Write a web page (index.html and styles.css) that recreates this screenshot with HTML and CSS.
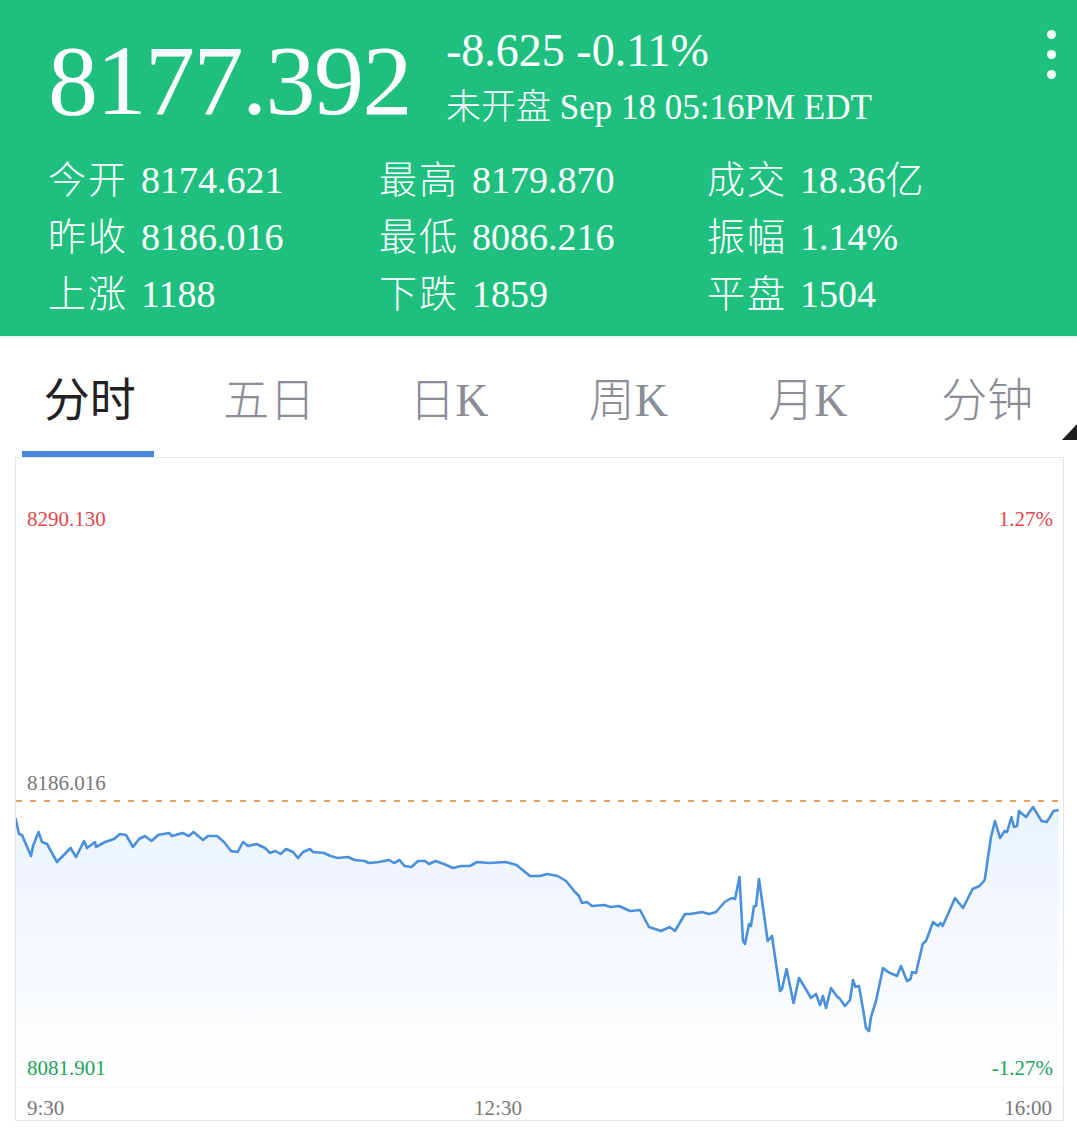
FILE: index.html
```html
<!DOCTYPE html>
<html lang="zh-CN">
<head>
    <meta charset="UTF-8">
    <meta name="viewport" content="width=device-width, initial-scale=1.0">
    <title>分时行情</title>
    <link rel="stylesheet" href="styles.css">
</head>
<body>
    <header class="quote-head">
        <div class="quote-top">
            <div class="price">8177.392</div>
            <div class="change">
                <div class="change-value">-8.625 -0.11%</div>
                <div class="market-time"><span class="cjk">未开盘</span> Sep 18 05:16PM EDT</div>
            </div>
            <div class="menu-dots">
                <span></span>
                <span></span>
                <span></span>
            </div>
        </div>
        <div class="stats">
            <div class="stat"><span class="stat-label">今开</span>8174.621</div>
            <div class="stat"><span class="stat-label">最高</span>8179.870</div>
            <div class="stat"><span class="stat-label">成交</span>18.36<span class="cjk">亿</span></div>
            <div class="stat"><span class="stat-label">昨收</span>8186.016</div>
            <div class="stat"><span class="stat-label">最低</span>8086.216</div>
            <div class="stat"><span class="stat-label">振幅</span>1.14%</div>
            <div class="stat"><span class="stat-label">上涨</span>1188</div>
            <div class="stat"><span class="stat-label">下跌</span>1859</div>
            <div class="stat"><span class="stat-label">平盘</span>1504</div>
        </div>
    </header>

    <nav class="tabs">
        <div class="tab active"><span class="tab-label">分时</span></div>
        <div class="tab"><span class="tab-label">五日</span></div>
        <div class="tab"><span class="tab-label">日K</span></div>
        <div class="tab"><span class="tab-label">周K</span></div>
        <div class="tab"><span class="tab-label">月K</span></div>
        <div class="tab"><span class="tab-label">分钟</span></div>
        <span class="corner"></span>
    </nav>

    <div class="chart">
        <svg class="chart-svg" width="1047" height="662" viewBox="16 459 1047 662">
            <defs>
                <linearGradient id="areaFill" x1="0" y1="0" x2="0" y2="1">
                    <stop offset="0" stop-color="#ebf3fb"/>
                    <stop offset="1" stop-color="#ffffff"/>
                </linearGradient>
            </defs>

            <!-- price area under the line -->
            <path id="area" fill="url(#areaFill)" d=""/>

            <line class="grid-line" x1="16" y1="1088" x2="1062" y2="1088"/>
            <line class="prev-close" x1="16" y1="802" x2="1062" y2="802"/>

            <polyline id="priceLine" class="price-line" points=""/>

            <text class="axis up" x="27" y="527">8290.130</text>
            <text class="axis up" x="1053" y="527" text-anchor="end">1.27%</text>
            <text class="axis flat" x="27" y="791">8186.016</text>
            <text class="axis down" x="27" y="1076">8081.901</text>
            <text class="axis down" x="1053" y="1076" text-anchor="end">-1.27%</text>
            <text class="axis flat" x="27" y="1116">9:30</text>
            <text class="axis flat" x="498" y="1116" text-anchor="middle">12:30</text>
            <text class="axis flat" x="1052" y="1116" text-anchor="end">16:00</text>
        </svg>
    </div>

    <script>
        // minute prices, already mapped to chart pixels
        const points = [
            [15.5,819],[19,835],[22,836],[31,857],[33,847],[38.5,833],[42,843],[47,845],[57,863],[70.6,849],
            [76,858],[84,842],[87,849],[95,843],[96,848],[105,843],[114,840],[120,835],[126,836],[133,848],
            [139,840],[145,837],[151.5,842],[158,836],[169,834],[172,837],[182.5,834],[189,837],[193.5,833],[203,841],
            [208,837],[217,837],[224,843],[231,852],[237.6,853],[243,843],[248,847],[256.5,845],[265,849],[270,854],
            [275.5,852],[280.6,855],[286,850],[293,853],[298,859],[303,853],[310,850],[313,853],[324,854],[330.6,857],
            [337.5,859],[348,858],[354.7,861],[365,862],[368.5,864],[379,863],[389,861],[394,864],[399.5,861],[404.6,867],
            [411.5,868],[418,862],[425,862],[429,865],[435.6,862],[444,865],[453,869],[461,867],[470,867],[477,863],
            [489,864],[506,863],[516.5,866],[530,877],[540,877],[547,875],[557.7,877],[566,882],[575,893],[579,897],
            [582,904],[587,903],[592,907],[604,906],[611,908],[619,907],[630,912],[640,911],[649,928],[661,932],
            [669.6,928],[675,932],[685,915],[690,915],[702,913],[709,915],[716,913],[724.7,903],[731.6,899],[735,900],
            [739.5,878],[743,942],[745,945],[749,925],[751,927],[754,907],[756,907],[759,880],[767.7,942],[772,937],
            [780,992],[782,990],[786.6,970],[793.5,1004],[799,979],[804,987],[811,999],[816,995],[820,1006],[823,997],
            [826,1009],[831,989],[836.6,997],[840,1000],[845,1007],[850,1001],[853,981],[855.5,988],[859,987],[863.5,1013],
            [866,1029],[869,1032],[871,1018],[876,1002],[883,969],[888,973],[897,977],[901,967],[907,982],[910.6,980],
            [912,973],[916,974],[922.7,945],[926,942],[933,923],[938,927],[940.6,924],[942.6,927],[948.5,914],[955,899],
            [963,909],[972.6,890],[979.5,887],[984.7,881],[991,838],[995,822],[1000,839],[1004.6,832],[1007,833],[1011.5,818],
            [1014,828],[1017,827],[1019,812],[1026,818],[1033,808],[1041.5,822],[1046.6,823],[1050,818],[1053.5,812],[1058.7,811]
        ];

        const pts = points.map(p => p.join(',')).join(' ');
        document.querySelector('#priceLine').setAttribute('points', pts);

        const first = points[0];
        const last = points[points.length - 1];
        const area = 'M' + pts.replace(/ /g, ' L') + ' L' + last[0] + ',1088 L' + first[0] + ',1088 Z';
        document.querySelector('#area').setAttribute('d', area);
    </script>
</body>
</html>
```

FILE: styles.css
```css
body {
    margin: 0;
    padding: 0;
    width: 1077px;
    background-color: #fff;
    font-family: "Liberation Serif", "Noto Sans CJK SC", serif;
}

.cjk {
    font-weight: 300;
}

.quote-head {
    box-sizing: border-box;
    height: 336px;
    padding: 25px 21px 0 48px;
    background-color: #1fbf7f;
    color: #fff;
}

.quote-top {
    display: flex;
    align-items: flex-start;
}

.price {
    margin-top: 6px;
    font-size: 100px;
    line-height: 100px;
    letter-spacing: -1.5px;
}

.change {
    margin-left: 35px;
}

.change-value {
    font-size: 46px;
    line-height: 52px;
}

.market-time {
    margin-top: 5px;
    font-size: 35px;
    line-height: 52px;
}

.menu-dots {
    display: flex;
    flex-direction: column;
    gap: 11px;
    margin-left: auto;
    margin-top: 5px;
}

.menu-dots span {
    width: 9px;
    height: 9px;
    border-radius: 50%;
    background-color: #f2fff9;
}

.stats {
    display: grid;
    grid-template-columns: 331px 328px 1fr;
    margin-top: 18px;
}

.stat {
    font-size: 38px;
    line-height: 57px;
    white-space: nowrap;
}

.stat-label {
    font-weight: 300;
    margin-right: 13px;
    letter-spacing: 2px;
}

.tabs {
    position: relative;
    display: flex;
    height: 121px;
    border-top: 2px solid #eaf6f1;
    box-sizing: border-box;
}

.tab {
    flex: 1;
    display: flex;
    flex-direction: column;
    align-items: center;
    padding-top: 33px;
    color: #8a8d96;
}

.tab-label {
    font-size: 46px;
    font-weight: 300;
    line-height: 60px;
}

.tab.active {
    color: #222;
}

.tab.active .tab-label {
    font-weight: 400;
}

.tab.active::after {
    content: "";
    margin-top: auto;
    width: 132px;
    height: 6px;
    margin-right: 3px;
    background-color: #4a86df;
}

.corner {
    position: absolute;
    right: 0;
    top: 86px;
    width: 0;
    height: 0;
    border-left: 15px solid transparent;
    border-bottom: 16px solid #1e1e1e;
}

.chart {
    width: 1047px;
    height: 662px;
    margin-left: 15px;
    border: 1px solid #e4e7eb;
}

.chart-svg {
    display: block;
}

.price-line {
    fill: none;
    stroke: #4a90da;
    stroke-width: 2.6;
    stroke-linejoin: round;
}

.prev-close {
    stroke: #e5a466;
    stroke-width: 2;
    stroke-dasharray: 6 8;
}

.grid-line {
    stroke: #eef0f2;
    stroke-width: 1;
}

.axis {
    font-family: "Liberation Serif", serif;
    font-size: 21px;
}

.axis.up {
    fill: #e0474a;
}

.axis.down {
    fill: #22a060;
}

.axis.flat {
    fill: #777;
}
```
